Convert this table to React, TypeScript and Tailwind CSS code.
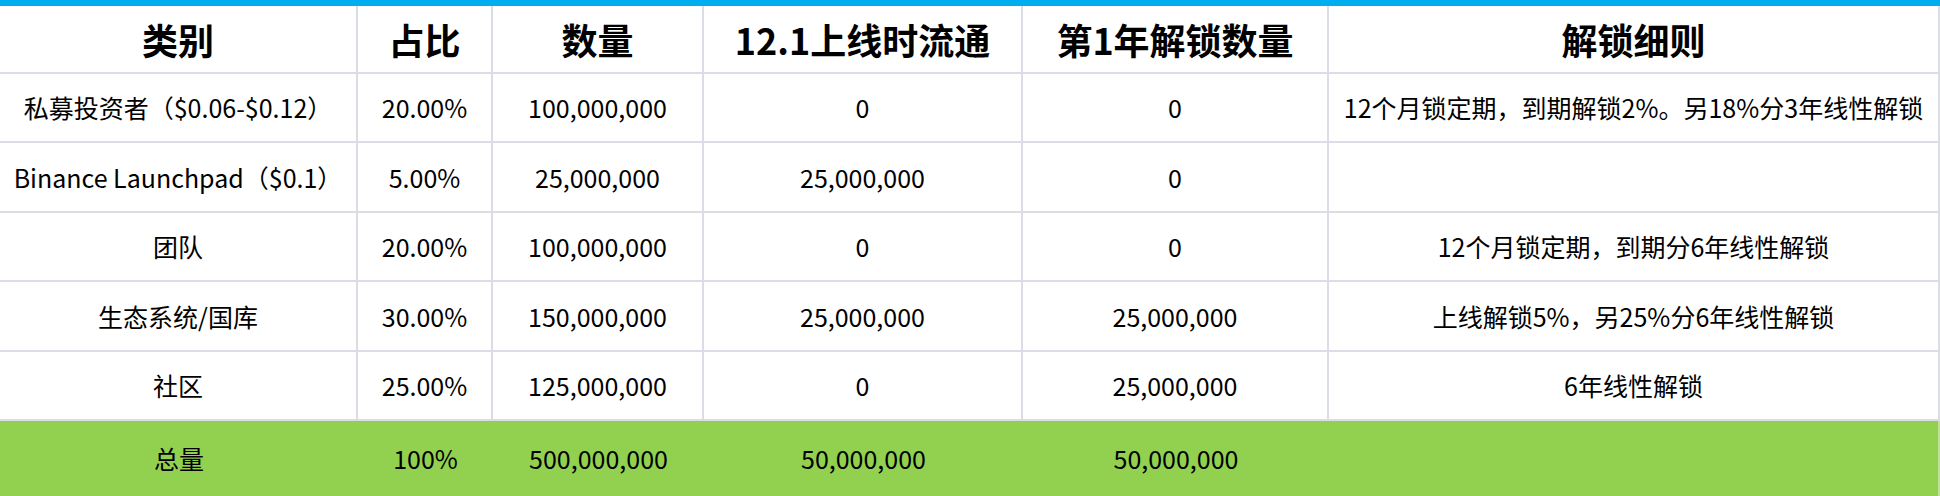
const columns = ['w-[358px]', 'w-[135px]', 'w-[211px]', 'w-[319px]', 'w-[306px]', 'w-[611px]'];

const headers = ['类别', '占比', '数量', '12.1上线时流通', '第1年解锁数量', '解锁细则'];

const rows: { cells: string[]; height: string }[] = [
  {
    cells: ['私募投资者（$0.06-$0.12）', '20.00%', '100,000,000', '0', '0', '12个月锁定期，到期解锁2%。另18%分3年线性解锁'],
    height: 'h-[69px]',
  },
  {
    cells: ['Binance Launchpad（$0.1）', '5.00%', '25,000,000', '25,000,000', '0', ''],
    height: 'h-[70px]',
  },
  {
    cells: ['团队', '20.00%', '100,000,000', '0', '0', '12个月锁定期，到期分6年线性解锁'],
    height: 'h-[69px]',
  },
  {
    cells: ['生态系统/国库', '30.00%', '150,000,000', '25,000,000', '25,000,000', '上线解锁5%，另25%分6年线性解锁'],
    height: 'h-[70px]',
  },
  {
    cells: ['社区', '25.00%', '125,000,000', '0', '25,000,000', '6年线性解锁'],
    height: 'h-[69px]',
  },
];

const total = ['总量', '100%', '500,000,000', '50,000,000', '50,000,000', ''];

export default function App() {
  return (
    <div
      className="w-[1940px] h-[496px] bg-white text-black overflow-hidden"
      style={{ fontFamily: '"Noto Sans CJK SC", "Noto Sans", sans-serif' }}
    >
      <div className="h-[6px] bg-[#00aeef]" />

      {/* header */}
      <div className="flex h-[68px] border-b-2 border-[#dcdce6]">
        {headers.map((h, i) => (
          <div
            key={h}
            className={`${columns[i]} shrink-0 flex items-center justify-center border-r-2 border-[#dcdce6] text-[36px] font-bold leading-none`}
          >
            {h}
          </div>
        ))}
      </div>

      {rows.map((row, r) => (
        <div key={r} className={`flex ${row.height} border-b-2 border-[#dcdce6]`}>
          {row.cells.map((c, i) => (
            <div
              key={i}
              className={`${columns[i]} shrink-0 flex items-center justify-center border-r-2 border-[#dcdce6] text-[25px] leading-none whitespace-nowrap`}
            >
              {c}
            </div>
          ))}
        </div>
      ))}

      {/* total row */}
      <div className="flex h-[75px] bg-[#92d050] border-r-2 border-[#c3e09a]">
        {total.map((c, i) => (
          <div
            key={i}
            className={`${i === 5 ? 'flex-1' : columns[i]} shrink-0 flex items-center justify-center text-[25px] leading-none`}
          >
            {c}
          </div>
        ))}
      </div>
    </div>
  );
}
